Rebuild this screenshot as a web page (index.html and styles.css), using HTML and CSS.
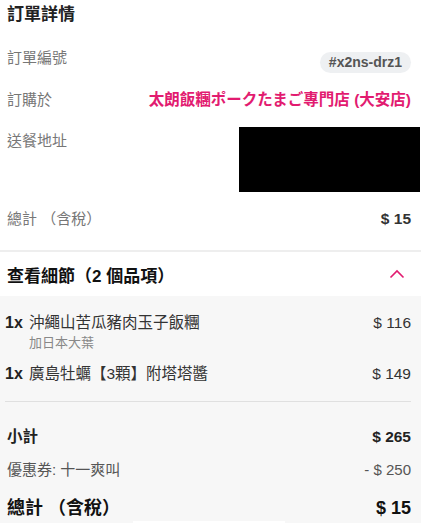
FILE: index.html
```html
<!DOCTYPE html>
<html lang="zh-Hant">
<head>
<meta charset="UTF-8" />
<meta name="viewport" content="width=device-width, initial-scale=1" />
<title>訂單詳情</title>
<link rel="stylesheet" href="styles.css">
</head>
<body>
  <div class="page">
    <div class="details">
      <h2 class="title">訂單詳情</h2>

      <div class="info-row first">
        <span class="label">訂單編號</span>
        <span class="pill">#x2ns-drz1</span>
      </div>

      <div class="info-row">
        <span class="label">訂購於</span>
        <span class="vendor">太朗飯糰ポークたまご專門店 (大安店)</span>
      </div>

      <div class="info-row">
        <span class="label address-label">送餐地址</span>
        <div class="redacted"></div>
      </div>

      <div class="info-row">
        <span class="label">總計 （含稅）</span>
        <span class="amount">$ 15</span>
      </div>
    </div>

    <div class="toggle">
      <span class="toggle-title">查看細節（2 個品項）</span>
      <svg class="chevron" width="16" height="10" viewBox="0 0 16 10">
        <path d="M1.5 8.5 L8 2 L14.5 8.5" fill="none" stroke="#e21b70" stroke-width="1.6" />
      </svg>
    </div>

    <div class="items">
      <div class="item">
        <span class="qty">1x</span>
        <div class="item-body">
          <div class="item-name">沖繩山苦瓜豬肉玉子飯糰</div>
          <div class="item-note">加日本大葉</div>
        </div>
        <span class="item-price">$ 116</span>
      </div>
      <div class="item">
        <span class="qty">1x</span>
        <div class="item-body">
          <div class="item-name">廣島牡蠣【3顆】附塔塔醬</div>
        </div>
        <span class="item-price">$ 149</span>
      </div>

      <hr class="divider" />

      <div class="sum-row subtotal">
        <span>小計</span>
        <span>$ 265</span>
      </div>
      <div class="sum-row voucher">
        <span>優惠券: 十一爽叫</span>
        <span>- $ 250</span>
      </div>
      <div class="sum-row total">
        <span>總計 （含稅）</span>
        <span>$ 15</span>
      </div>
      <div class="bottom-tab"></div>
    </div>
  </div>
</body>
</html>
```

FILE: styles.css
```css
body {
  margin: 0;
  background: #fff;
  font-family: 'Liberation Sans', 'Noto Sans CJK TC', sans-serif;
  color: #222;
}

.page {
  width: 421px;
}

.details {
  padding: 3px 10px 20px 7px;
}

.title {
  margin: 0;
  font-size: 17px;
  line-height: 24px;
  font-weight: bold;
  color: #222;
}

.info-row {
  display: flex;
  justify-content: space-between;
  align-items: flex-start;
  margin-top: 16px;
}

.info-row.first {
  margin-top: 20px;
}

.label {
  font-size: 15px;
  line-height: 22px;
  color: #777;
}

.address-label {
  margin-top: 3px;
}

.pill {
  margin-top: 5px;
  height: 21px;
  line-height: 21px;
  padding: 0 9px;
  border-radius: 11px;
  background: #eef0f2;
  color: #555;
  font-size: 14px;
  font-weight: bold;
}

.vendor {
  font-size: 15.5px;
  line-height: 22px;
  font-weight: bold;
  color: #e21b70;
}

.redacted {
  width: 181px;
  height: 65px;
  background: #000;
  margin-right: -9px;
}

.amount {
  font-size: 15.5px;
  line-height: 22px;
  font-weight: bold;
  color: #333;
}

.toggle {
  display: flex;
  justify-content: space-between;
  align-items: center;
  height: 44px;
  padding: 0 16px 0 7px;
  border-top: 2px solid #eeeeee;
}

.toggle-title {
  font-size: 17px;
  font-weight: bold;
  color: #111;
}

.items {
  background: #f7f7f7;
  padding: 16px 10px 6px 7px;
}

.item {
  display: flex;
  align-items: flex-start;
  margin-bottom: 12px;
}

.qty {
  width: 24px;
  margin-left: -2px;
  font-size: 16px;
  line-height: 22px;
  font-weight: bold;
  color: #222;
}

.item-body {
  flex: 1;
}

.item-name {
  font-size: 15.5px;
  line-height: 22px;
  color: #333;
}

.item-note {
  font-size: 13px;
  line-height: 17px;
  color: #888;
}

.item-price {
  font-size: 15.5px;
  line-height: 22px;
  color: #333;
}

.divider {
  border: none;
  border-top: 1px solid #e0e0e0;
  margin: 16px 0 0 -2px;
}

.sum-row {
  display: flex;
  justify-content: space-between;
  align-items: center;
}

.subtotal {
  margin-top: 24px;
  font-size: 15.5px;
  line-height: 22px;
  font-weight: bold;
  color: #222;
}

.voucher {
  margin-top: 11px;
  font-size: 15px;
  line-height: 22px;
  color: #555;
}

.total {
  margin-top: 14px;
  font-size: 18px;
  line-height: 26px;
  font-weight: bold;
  color: #111;
}

.bottom-tab {
  margin: 0 0 0 126px;
  width: 152px;
  height: 10px;
  background: #fff;
}
```
